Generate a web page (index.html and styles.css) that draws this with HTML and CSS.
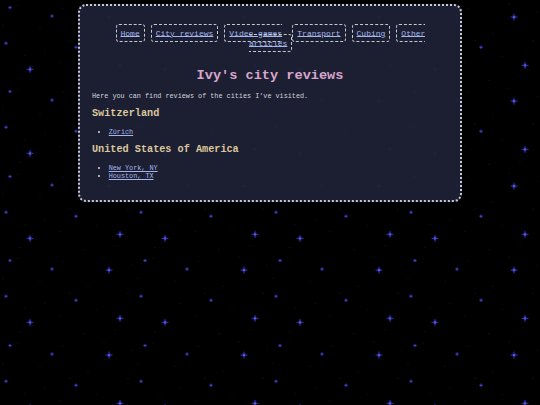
FILE: index.html
```html
<!DOCTYPE html>
<html lang="en">
<head>
<meta charset="utf-8">
<title>Ivy's city reviews</title>
<link rel="stylesheet" href="styles.css">
</head>
<body>
<main class="card">
  <nav>
    <ul class="nav-list">
      <li class="nav-item"><a href="#">Home</a></li>
      <li class="nav-item"><a href="#">City reviews</a></li>
      <li class="nav-item nav-item-wrap"><a href="#">Video games articles</a></li>
      <li class="nav-item"><a href="#">Transport</a></li>
      <li class="nav-item"><a href="#">Cubing</a></li>
      <li class="nav-item"><a href="#">Other</a></li>
    </ul>
  </nav>
  <h1 class="title">Ivy's city reviews</h1>
  <p class="intro">Here you can find reviews of the cities I've visited.</p>
  <h2 class="country">Switzerland</h2>
  <ul class="cities">
    <li><a href="#">Zürich</a></li>
  </ul>
  <h2 class="country">United States of America</h2>
  <ul class="cities">
    <li><a href="#">New York, NY</a></li>
    <li><a href="#">Houston, TX</a></li>
  </ul>
</main>
</body>
</html>
```
FILE: styles.css
```css
html, body {
  margin: 0;
  padding: 0;
}

body {
  min-height: 405px;
  background-color: #000;
  background-image: url("data:image/svg+xml;utf8,<svg xmlns='http://www.w3.org/2000/svg' width='135' height='84.5' viewBox='0 0 135 84.5'><g fill='%23555' opacity='0.6'><circle cx='18' cy='5' r='0.4'/><circle cx='40' cy='28' r='0.4'/><circle cx='63' cy='8' r='0.4'/><circle cx='88' cy='33' r='0.4'/><circle cx='97' cy='56' r='0.4'/><circle cx='128' cy='40' r='0.4'/><circle cx='20' cy='78' r='0.4'/><circle cx='60' cy='62' r='0.4'/><circle cx='84' cy='80' r='0.4'/><circle cx='115' cy='76' r='0.4'/><circle cx='3' cy='25' r='0.4'/><circle cx='45' cy='50' r='0.4'/><circle cx='132' cy='12' r='0.4'/><circle cx='70' cy='40' r='0.4'/><circle cx='25' cy='55' r='0.4'/><circle cx='104' cy='4' r='0.4'/></g><g fill='%232828a0' opacity='0.45'><circle cx='6' cy='43' r='1.8'/><circle cx='76' cy='47' r='1.8'/><circle cx='10' cy='7.5' r='1.8'/><circle cx='52' cy='16' r='1.8'/><circle cx='30' cy='69' r='2.4'/><circle cx='120' cy='65' r='2.4'/><circle cx='109' cy='17' r='2.4'/></g><g fill='%232e2ea8'><rect x='5.5' y='41.5' width='1' height='3'/><rect x='4.5' y='42.5' width='3' height='1'/><rect x='75.5' y='45.5' width='1' height='3'/><rect x='74.5' y='46.5' width='3' height='1'/><rect x='9.5' y='6' width='1' height='3'/><rect x='8.5' y='7' width='3' height='1'/><rect x='51.5' y='14.5' width='1' height='3'/><rect x='50.5' y='15.5' width='3' height='1'/><rect x='29.5' y='65.5' width='1' height='7'/><rect x='26.5' y='68.5' width='7' height='1'/><rect x='119.5' y='61.5' width='1' height='7'/><rect x='116.5' y='64.5' width='7' height='1'/><rect x='108.5' y='13.5' width='1' height='7'/><rect x='105.5' y='16.5' width='7' height='1'/></g><g fill='%235c5cd8'><rect x='5.5' y='42.5' width='1' height='1'/><rect x='75.5' y='46.5' width='1' height='1'/><rect x='9.5' y='7' width='1' height='1'/><rect x='51.5' y='15.5' width='1' height='1'/><rect x='29' y='68' width='2' height='2'/><rect x='119' y='64' width='2' height='2'/><rect x='108' y='16' width='2' height='2'/></g></svg>");
  background-size: 135px 84.5px;
  font-family: "Liberation Mono", "DejaVu Sans Mono", monospace;
  font-size: 6.8px;
  color: #d4d4dc;
  overflow: hidden;
}

.card {
  box-sizing: border-box;
  width: 384px;
  margin: 4px auto 0;
  padding: 12px 12px 13px;
  border: 2px dotted #c6c8d2;
  border-radius: 8px;
  background: rgba(30, 32, 52, 0.94);
}

.nav-list {
  display: flex;
  gap: 6px;
  width: 309px;
  margin: 5px auto 0;
  padding: 5px 0;
  list-style: none;
  overflow: hidden;
  font-size: 8px;
  line-height: 10px;
}

.nav-item {
  flex-shrink: 0;
  white-space: nowrap;
}

.nav-item-wrap {
  width: 68px;
  margin-right: -6px;
  white-space: normal;
  text-align: left;
  text-align-last: right;
}

.nav-item a {
  padding: 3.5px 4px;
  border: 1px dashed #c6c8d2;
  border-radius: 3px;
  color: #a4b6ec;
  text-decoration: underline;
}

.title {
  margin: 14.7px 0 9.1px;
  text-align: center;
  font-size: 13.6px;
  font-weight: bold;
  color: #d8a6cc;
}

.intro {
  margin: 9.1px 0 8.5px;
}

.country {
  margin: 8.5px 0;
  font-size: 10.2px;
  font-weight: bold;
  color: #dcc89e;
}

.cities {
  margin: 8.5px 0 6.8px;
  padding-left: 16.7px;
  list-style: disc;
}

.cities a {
  color: #a4b6ec;
  text-decoration: underline;
}
```
